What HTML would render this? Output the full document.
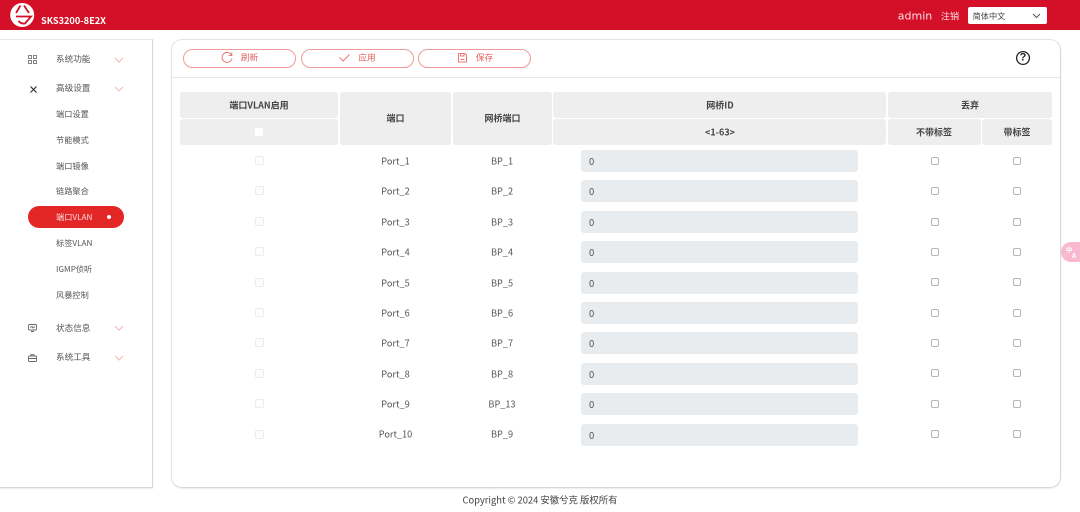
<!DOCTYPE html>
<html lang="zh"><head><meta charset="utf-8"><title>SKS3200-8E2X</title>
<style>
html,body{margin:0;padding:0;width:1080px;height:512px;overflow:hidden;background:#fff;font-family:"Noto Sans CJK SC","Liberation Sans",sans-serif;color:#444}
div,span{position:absolute;box-sizing:border-box;white-space:nowrap}
.t{transform:translate(-50%,-50%);line-height:1}
.m{font-size:8.6px;color:#555}
.s{font-size:8.2px;color:#555}
.h{background:#eee;border-radius:3px}
.b{font-size:9px;font-weight:700;color:#444}
.c{font-size:9.2px;color:#555;margin-top:.3px}
.btn{top:49px;height:19px;width:113px;border:1px solid #f09a9a;border-radius:10px}
.bt{top:58.300px;font-size:8.6px;color:#e2605f}
.cb{width:8px;height:8px;border:1px solid #b5b5b5;border-radius:2px;background:#fff}
.cd{width:9px;height:9px;border:1px solid #ececec;border-radius:2px;background:#fdfdfd}
.in{left:581px;width:277px;height:22px;background:#e9ecef;border-radius:3px;font-size:9.500px;line-height:22.400px;padding-left:8px;color:#555}
svg{position:absolute;overflow:visible}
</style></head><body>
<div style="left:0;top:0;width:1080px;height:30px;background:#d31027"></div>
<svg style="left:10px;top:3px" width="25" height="24" viewBox="0 0 25 24"><circle cx="12.200" cy="12" r="12" fill="#fff"/><path d="M10.500 2.500 L6 10 M14 2.500 L19 10 M6 13.500 H21 L15 20.500 Q11 21 8.500 18" fill="none" stroke="#d31027" stroke-width="1.800"/></svg>
<div style="left:41px;top:14px;font-size:9.200px;line-height:13px;font-weight:700;color:#fff">SKS3200-8E2X</div>
<div class="t" style="left:915px;top:15.500px;font-size:11px;color:#f8dfe2;font-family:'DejaVu Sans',sans-serif">admin</div>
<div class="t" style="left:950px;top:15.500px;font-size:9.200px;color:#f8dfe2">注销</div>
<div style="left:968px;top:7px;width:79px;height:17px;background:#fff;border-radius:2px"></div>
<div class="t" style="left:989px;top:15.500px;font-size:8.200px;color:#444">简体中文</div>
<svg style="left:1032px;top:13px" width="9" height="6"><path d="M1 1 L4.500 4.500 L8 1" fill="none" stroke="#555" stroke-width="1"/></svg>

<!-- sidebar -->
<div style="left:-4px;top:39px;width:157px;height:449px;background:#fff;border:1px solid #e8e8e8;border-right:1px solid #d8d8d8;border-bottom:1px solid #d8d8d8;box-shadow:0 1px 1px rgba(0,0,0,.08)"></div>
<svg style="left:28px;top:55px" width="9" height="9" fill="none" stroke="#777" stroke-width=".9"><rect x=".5" y=".5" width="3" height="3"/><rect x="5.500" y=".5" width="3" height="3"/><rect x=".5" y="5.500" width="3" height="3"/><rect x="5.500" y="5.500" width="3" height="3"/></svg>
<svg style="left:30px;top:85.500px" width="7" height="7" fill="none" stroke="#333" stroke-width="1.200"><path d="M.5 .5 L6.500 6.500 M6.500 .5 L.5 6.500"/></svg>
<svg style="left:28px;top:324px" width="9" height="8" fill="none" stroke="#666" stroke-width=".9"><rect x=".5" y=".5" width="8" height="5.500" rx="1"/><path d="M2 3.500 L4 2.500 L5 4 L7 2.500 M3 7.500 H6"/></svg>
<svg style="left:28px;top:354px" width="9" height="8" fill="none" stroke="#666" stroke-width=".9"><rect x=".5" y="2" width="8" height="5.500" rx="1"/><path d="M3 2 V.7 H6 V2 M.5 4.500 H8.500"/></svg>
<div class="m" style="left:56px;top:53px;line-height:13px">系统功能</div>
<div class="m" style="left:56px;top:82px;line-height:13px">高级设置</div>
<div class="m" style="left:56px;top:322px;line-height:13px">状态信息</div>
<div class="m" style="left:56px;top:351px;line-height:13px">系统工具</div>
<svg style="left:114px;top:57px" width="10" height="6"><path d="M1 1 L5 5 L9 1" fill="none" stroke="#f6b5b5"/></svg>
<svg style="left:114px;top:86px" width="10" height="6"><path d="M1 1 L5 5 L9 1" fill="none" stroke="#f6b5b5"/></svg>
<svg style="left:114px;top:325px" width="10" height="6"><path d="M1 1 L5 5 L9 1" fill="none" stroke="#f6b5b5"/></svg>
<svg style="left:114px;top:355px" width="10" height="6"><path d="M1 1 L5 5 L9 1" fill="none" stroke="#f6b5b5"/></svg>
<div class="s" style="left:56px;top:108px;line-height:13px">端口设置</div>
<div class="s" style="left:56px;top:134px;line-height:13px">节能模式</div>
<div class="s" style="left:56px;top:160px;line-height:13px">端口镜像</div>
<div class="s" style="left:56px;top:185px;line-height:13px">链路聚合</div>
<div style="left:28px;top:206px;width:96px;height:22px;background:#e32626;border-radius:11px"></div>
<div class="s" style="left:56px;top:211px;line-height:13px;color:#fbdcdc">端口VLAN</div>
<div style="left:107px;top:215px;width:4px;height:4px;border-radius:50%;background:#fff"></div>
<div class="s" style="left:56px;top:237px;line-height:13px">标签VLAN</div>
<div class="s" style="left:56px;top:263px;line-height:13px">IGMP侦听</div>
<div class="s" style="left:56px;top:289px;line-height:13px">风暴控制</div>

<!-- main -->
<div style="left:171px;top:39px;width:890px;height:449px;border:1px solid #e4e4e4;border-bottom:1px solid #d8d8d8;border-right:1px solid #d8d8d8;border-radius:11px;box-shadow:0 1px 1px rgba(0,0,0,.08)"></div>
<div style="left:172px;top:77px;width:888px;height:1px;background:#e8e8e8"></div>
<div class="btn" style="left:183px"></div><div class="btn" style="left:301px"></div><div class="btn" style="left:418px"></div>
<svg style="left:221px;top:52px" width="12" height="12" fill="none" stroke="#e77" stroke-width="1"><path d="M10.500 3 A5 5 0 1 0 11 6.500 M10.800 .5 V3.500 H7.800"/></svg>
<svg style="left:339px;top:54px" width="11" height="8" fill="none" stroke="#e77" stroke-width="1"><path d="M.5 3.500 L4 7 L10.500 .5"/></svg>
<svg style="left:458px;top:53px" width="9" height="10" fill="none" stroke="#e77" stroke-width="1"><path d="M.5 .5 H7 L8.500 2 V9 H.5 Z M2.500 .5 V3 H6 V.5 M2.500 6.500 H6.500"/></svg>
<div class="bt t" style="left:249.500px">刷新</div>
<div class="bt t" style="left:367px">应用</div>
<div class="bt t" style="left:484.500px">保存</div>
<svg style="left:1016px;top:51px" width="14" height="14"><circle cx="7" cy="7" r="6.400" fill="none" stroke="#222" stroke-width="1.300"/></svg>
<div class="t" style="left:1023px;top:58px;font-size:11px;font-weight:700;color:#222;font-family:'Liberation Sans',sans-serif">?</div>

<!-- table head -->
<div class="h" style="left:180px;top:92px;width:158px;height:26px"></div>
<div class="h" style="left:180px;top:119px;width:158px;height:26px"></div>
<div class="h" style="left:340px;top:92px;width:111px;height:53px"></div>
<div class="h" style="left:453px;top:92px;width:99px;height:53px"></div>
<div class="h" style="left:553px;top:92px;width:333px;height:26px"></div>
<div class="h" style="left:553px;top:119px;width:333px;height:26px"></div>
<div class="h" style="left:888px;top:92px;width:164px;height:26px"></div>
<div class="h" style="left:888px;top:119px;width:93px;height:26px"></div>
<div class="h" style="left:982px;top:119px;width:70px;height:26px"></div>
<div class="b t" style="left:259px;top:104.500px">端口VLAN启用</div>
<div class="b t" style="left:395.500px;top:118px">端口</div>
<div class="b t" style="left:502.500px;top:118px">网桥端口</div>
<div class="b t" style="left:720px;top:105px">网桥ID</div>
<div class="b t" style="left:720px;top:132px">&lt;1-63&gt;</div>
<div class="b t" style="left:970px;top:105px">丢弃</div>
<div class="b t" style="left:934px;top:132px">不带标签</div>
<div class="b t" style="left:1017px;top:132px">带标签</div>
<div style="left:255px;top:128px;width:8px;height:8px;background:#fff;border-radius:1px"></div>

<!-- rows -->
<div class="cd" style="left:255px;top:156px"></div><div class="c t" style="left:395.500px;top:161px">Port_1</div><div class="c t" style="left:502px;top:161px">BP_1</div><div class="in" style="top:150px">0</div><div class="cb" style="left:930.500px;top:157px"></div><div class="cb" style="left:1013px;top:157px"></div>
<div class="cd" style="left:255px;top:186px"></div><div class="c t" style="left:395.500px;top:191px">Port_2</div><div class="c t" style="left:502px;top:191px">BP_2</div><div class="in" style="top:180px">0</div><div class="cb" style="left:930.500px;top:187px"></div><div class="cb" style="left:1013px;top:187px"></div>
<div class="cd" style="left:255px;top:217px"></div><div class="c t" style="left:395.500px;top:222px">Port_3</div><div class="c t" style="left:502px;top:222px">BP_3</div><div class="in" style="top:211px">0</div><div class="cb" style="left:930.500px;top:218px"></div><div class="cb" style="left:1013px;top:218px"></div>
<div class="cd" style="left:255px;top:247px"></div><div class="c t" style="left:395.500px;top:252px">Port_4</div><div class="c t" style="left:502px;top:252px">BP_4</div><div class="in" style="top:241px">0</div><div class="cb" style="left:930.500px;top:248px"></div><div class="cb" style="left:1013px;top:248px"></div>
<div class="cd" style="left:255px;top:278px"></div><div class="c t" style="left:395.500px;top:283px">Port_5</div><div class="c t" style="left:502px;top:283px">BP_5</div><div class="in" style="top:272px">0</div><div class="cb" style="left:930.500px;top:278px"></div><div class="cb" style="left:1013px;top:278px"></div>
<div class="cd" style="left:255px;top:308px"></div><div class="c t" style="left:395.500px;top:313px">Port_6</div><div class="c t" style="left:502px;top:313px">BP_6</div><div class="in" style="top:302px">0</div><div class="cb" style="left:930.500px;top:309px"></div><div class="cb" style="left:1013px;top:309px"></div>
<div class="cd" style="left:255px;top:338px"></div><div class="c t" style="left:395.500px;top:343px">Port_7</div><div class="c t" style="left:502px;top:343px">BP_7</div><div class="in" style="top:332px">0</div><div class="cb" style="left:930.500px;top:339px"></div><div class="cb" style="left:1013px;top:339px"></div>
<div class="cd" style="left:255px;top:369px"></div><div class="c t" style="left:395.500px;top:374px">Port_8</div><div class="c t" style="left:502px;top:374px">BP_8</div><div class="in" style="top:363px">0</div><div class="cb" style="left:930.500px;top:369px"></div><div class="cb" style="left:1013px;top:369px"></div>
<div class="cd" style="left:255px;top:399px"></div><div class="c t" style="left:395.500px;top:404px">Port_9</div><div class="c t" style="left:502px;top:404px">BP_13</div><div class="in" style="top:393px">0</div><div class="cb" style="left:930.500px;top:400px"></div><div class="cb" style="left:1013px;top:400px"></div>
<div class="cd" style="left:255px;top:430px"></div><div class="c t" style="left:395.500px;top:434px">Port_10</div><div class="c t" style="left:502px;top:434px">BP_9</div><div class="in" style="top:424px">0</div><div class="cb" style="left:930.500px;top:430px"></div><div class="cb" style="left:1013px;top:430px"></div>

<div class="t" style="left:540px;top:499.500px;font-size:9.400px;color:#444">Copyright © 2024 安徽兮克 版权所有</div>

<!-- floating translate -->
<div style="left:1061px;top:242px;width:30px;height:20px;border-radius:10px;background:#f8b8d0"></div>
<div class="t" style="left:1069px;top:249px;font-size:6.500px;color:#fff;font-weight:700">中</div>
<div class="t" style="left:1074px;top:255px;font-size:6.500px;color:#fff;font-weight:700">A</div>
</body></html>
